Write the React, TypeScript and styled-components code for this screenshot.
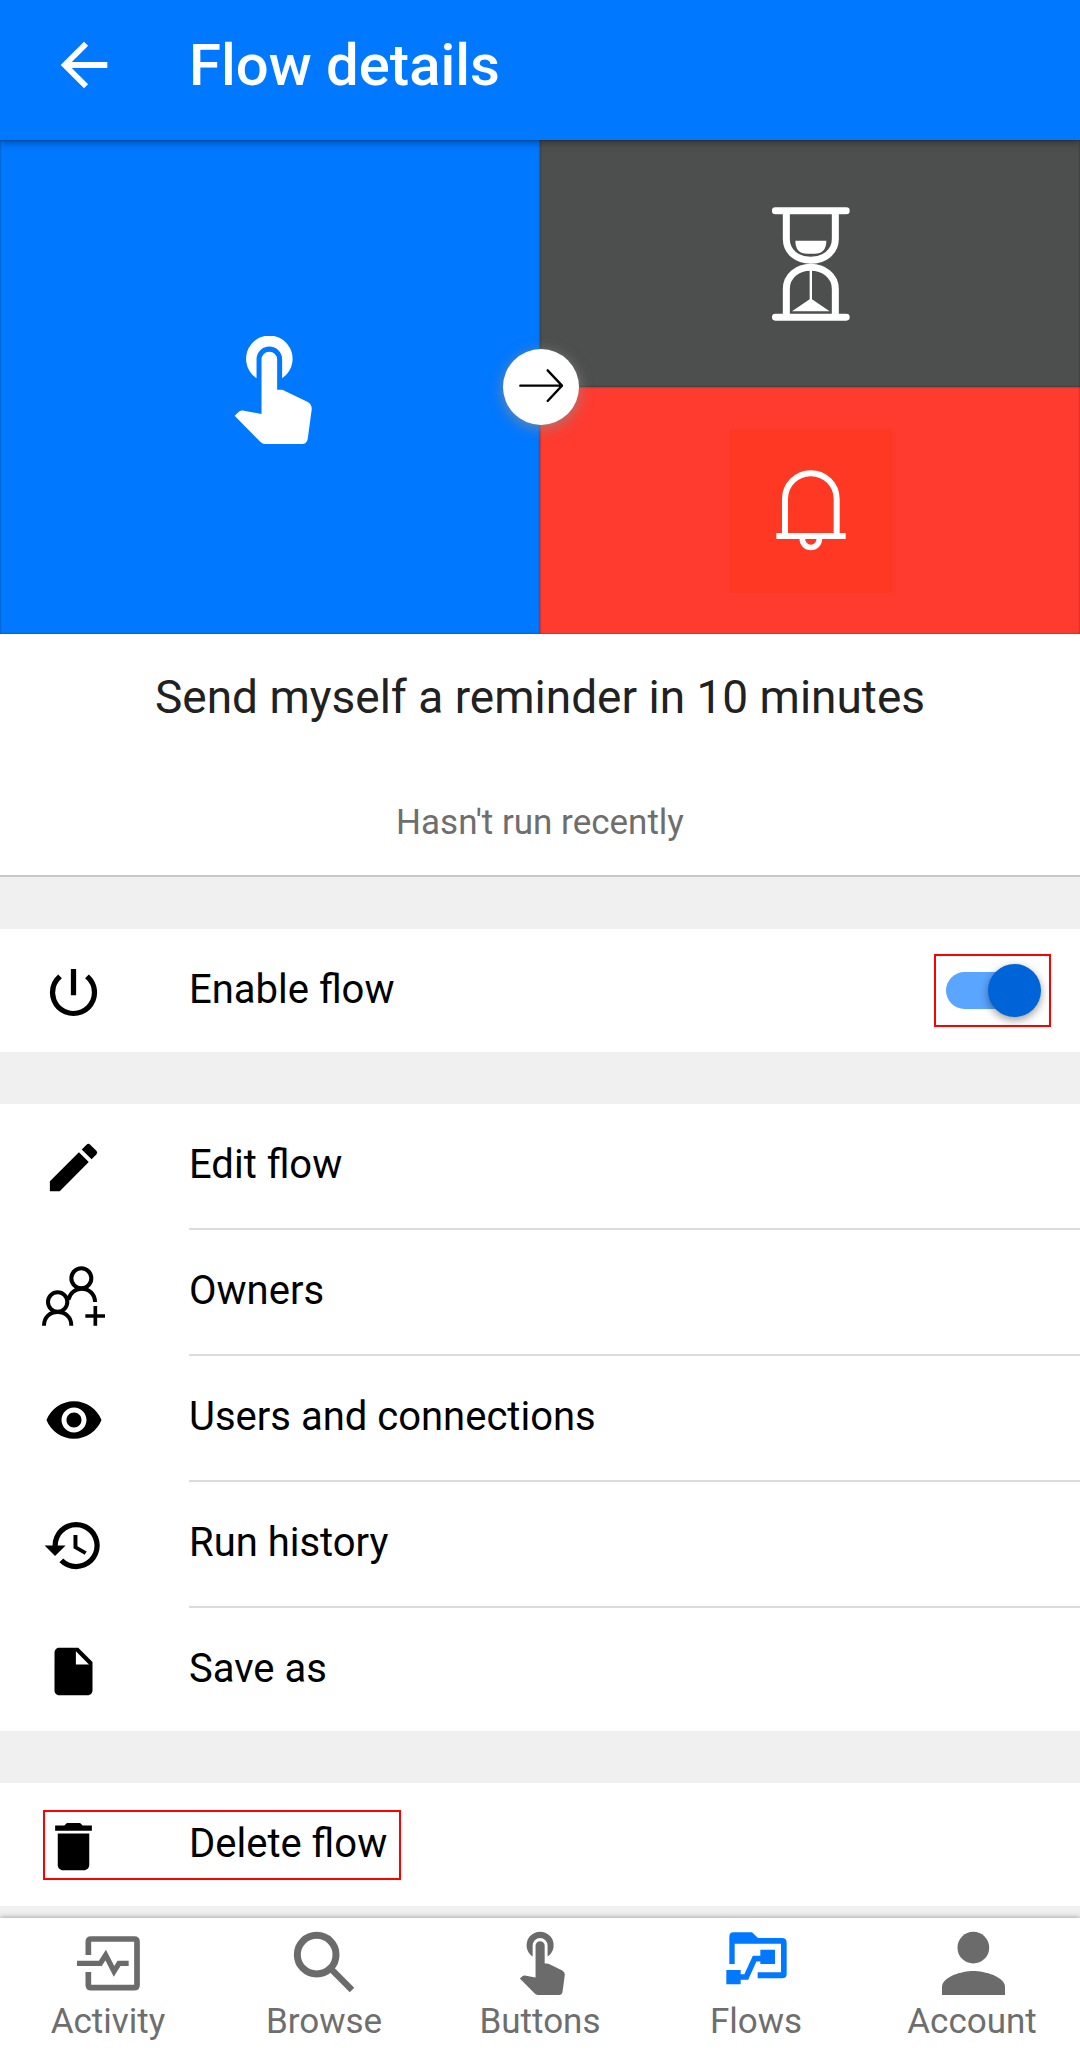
import React from 'react';
import styled, { createGlobalStyle } from 'styled-components';
import {
  MdArrowBack,
  MdDelete,
  MdEdit,
  MdHistory,
  MdInsertDriveFile,
  MdPowerSettingsNew,
  MdVisibility,
} from 'react-icons/md';

const GlobalStyle = createGlobalStyle`
  *, *::before, *::after { box-sizing: border-box; }
  body {
    margin: 0;
    background: #f0f0f0;
    font-family: Roboto, "Liberation Sans", sans-serif;
    color: #000;
  }
  button { font: inherit; color: inherit; border: 0; background: none; padding: 0; cursor: pointer; }
  h1, h2, p, ul { margin: 0; padding: 0; }
  svg { display: block; flex: none; }
`;

const Page = styled.div`
  min-height: 100vh;
  display: flex;
  flex-direction: column;
`;

const Header = styled.header`
  position: relative;
  z-index: 1;
  height: 140px;
  padding: 0 49px 10px;
  display: flex;
  align-items: center;
  gap: 70px;
  background: #0078ff;
  color: #fff;
  box-shadow: 0 2px 8px rgba(0, 0, 0, 0.4);
`;

const HeaderTitle = styled.h1`
  font-size: 58px;
  line-height: 68px;
  font-weight: 500;
`;

const Main = styled.main`
  flex: 1;
  display: flex;
  flex-direction: column;
  gap: 52px;
`;

const Hero = styled.div`
  position: relative;
  display: grid;
  grid-template-columns: 1fr 1fr;
  grid-template-rows: 247px 247px;
`;

const Tile = styled.div<{ $color: string; $tall?: boolean }>`
  grid-row: ${(p) => (p.$tall ? 'span 2' : 'auto')};
  padding: ${(p) => (p.$tall ? '5px 0 0' : '0 0 0 2px')};
  display: flex;
  align-items: center;
  justify-content: center;
  background: ${(p) => p.$color};
  box-shadow: inset 0 0 2px rgba(0, 0, 0, 0.5);
  color: #fff;
`;

const TileIcon = styled.div<{ $color?: string }>`
  width: 164px;
  height: 164px;
  display: flex;
  align-items: center;
  justify-content: center;
  background: ${(p) => p.$color || 'transparent'};
`;

const ArrowBadge = styled.div`
  position: absolute;
  top: 50%;
  left: 50%;
  width: 76px;
  height: 76px;
  margin: -38px 0 0 -37px;
  display: flex;
  align-items: center;
  justify-content: center;
  border-radius: 50%;
  background: #fff;
  box-shadow: 0 3px 14px rgba(140, 140, 140, 0.8);
`;

const Info = styled.div`
  padding: 33px 24px 32px;
  display: flex;
  flex-direction: column;
  gap: 76px;
  border-bottom: 2px solid #c8c8c8;
  background: #fff;
  text-align: center;
`;

const FlowName = styled.h2`
  font-size: 46px;
  line-height: 60px;
  font-weight: 400;
  color: #212121;
`;

const RunStatus = styled.p`
  font-size: 35px;
  line-height: 40px;
  color: #6e6e6e;
`;

const List = styled.ul`
  list-style: none;
  background: #fff;
`;

const Item = styled.li`
  position: relative;
  display: flex;
  flex-direction: column;

  &:not(:last-child) {
    padding-bottom: 3px;
  }

  &:not(:last-child)::after {
    content: '';
    position: absolute;
    left: 189px;
    right: 0;
    bottom: 0;
    height: 2px;
    background: #dcdcdc;
  }
`;

const RowButton = styled.button`
  height: 123px;
  padding-left: 42px;
  display: flex;
  align-items: center;
  text-align: left;
`;

const RowField = styled.div`
  height: 123px;
  padding: 0 29px 0 42px;
  display: flex;
  align-items: center;
  justify-content: space-between;
`;

const RowContent = styled.span<{ $marked?: boolean }>`
  position: relative;
  display: flex;
  align-items: center;
  gap: 84px;

  &::after {
    content: '';
    display: ${(p) => (p.$marked ? 'block' : 'none')};
    position: absolute;
    inset: -1px -14px -2px 1px;
    border: 2px solid #f00;
  }
`;

const RowIcon = styled.span`
  width: 63px;
  height: 67px;
  padding-top: 4px;
  display: flex;
  align-items: center;
  justify-content: center;
`;

const RowLabel = styled.span`
  padding-bottom: 1px;
  font-size: 40px;
  line-height: 48px;
`;

const SwitchMark = styled.span`
  padding: 8px 8px 8px 10px;
  display: flex;
  border: 2px solid #f00;
`;

const Switch = styled.input`
  appearance: none;
  width: 95px;
  height: 53px;
  margin: 0;
  display: grid;
  align-items: center;
  cursor: pointer;

  &::before {
    content: '';
    grid-area: 1 / 1;
    width: 88px;
    height: 37px;
    border-radius: 19px;
    background: #bdbdbd;
  }

  &::after {
    content: '';
    grid-area: 1 / 1;
    width: 53px;
    height: 53px;
    border-radius: 50%;
    background: #fafafa;
    box-shadow: 0 3px 8px rgba(0, 0, 0, 0.4);
  }

  &:checked::before { background: #5aa5ff; }
  &:checked::after { justify-self: end; background: #0064d9; }
`;

const TabBar = styled.nav`
  position: sticky;
  bottom: 0;
  padding: 14px 0 20px;
  display: grid;
  grid-template-columns: repeat(5, 1fr);
  background: #fff;
  box-shadow: 0 -1px 5px rgba(0, 0, 0, 0.3);
`;

const Tab = styled.button<{ $active?: boolean }>`
  display: flex;
  flex-direction: column;
  align-items: center;
  gap: 7px;
  font-size: 35px;
  line-height: 40px;
  color: #6e6e6e;

  svg {
    width: 63px;
    height: 63px;
    overflow: visible;
    color: ${(p) => (p.$active ? '#0078ff' : '#6b6b6b')};
  }
`;

const TapIcon = ({ size = 63 }: { size?: number }) => (
  <svg width={size} height={size} viewBox="47 76 325 325" fill="currentColor" aria-hidden="true">
    <path d="M169 203A70 70 0 1 1 246 203V146A38.5 38.5 0 0 0 169 146Z" />
    <path d="M184 147A23.5 23.5 0 0 1 231 147V238H243Q249 238 256 242L322 274Q336 282 335 297L323 386Q320 401 306 401H195Q187 401 181 395L103 316L116 304Q121 299 128 300L184 311Z" />
  </svg>
);

const HourglassIcon = () => (
  <svg width="78" height="114" viewBox="218 79 234 342" fill="currentColor" aria-hidden="true">
    <rect x="218" y="80" width="233" height="21" rx="10" />
    <rect x="218" y="399" width="233" height="21" rx="10" />
    <g fill="none" stroke="currentColor" strokeWidth="21">
      <path d="M261 98V175C261 215 295 239 334 239S408 215 408 175V98" />
      <path d="M261 402V325C261 285 295 260 334 260S408 285 408 325V402" />
    </g>
    <path d="M288 180H381Q381 219 345 219H324Q288 219 288 180Z" />
    <path d="M331 268H338V356L391 392H278L331 356Z" />
  </svg>
);

const BellIcon = () => (
  <svg width="70" height="81" viewBox="232 871 210 243" fill="none" stroke="currentColor" aria-hidden="true">
    <path strokeWidth="18" d="M259 1064V958A77.5 77.5 0 0 1 414 958V1064" />
    <path strokeWidth="18" d="M233 1069H441" />
    <path strokeWidth="17" d="M311 1076V1078A25.5 25.5 0 0 0 362 1078V1076" />
  </svg>
);

const ArrowIcon = () => (
  <svg width="76" height="76" viewBox="909 116 228 228" fill="none" stroke="#000" strokeWidth="7" strokeLinecap="round" strokeLinejoin="round" aria-hidden="true">
    <path d="M961 226H1086M1043 180L1086 226L1043 272" />
  </svg>
);

const OwnersIcon = () => (
  <svg width="63" height="63" viewBox="126 67 189 189" fill="none" stroke="currentColor" strokeWidth="12" overflow="visible" aria-hidden="true">
    <circle cx="244" cy="116" r="30" />
    <circle cx="173" cy="187" r="29" />
    <path d="M132 258C132 232 150 217 173 217S214 232 214 258" />
    <path d="M205 180C210 160 226 147 244 147C268 147 285 164 285 187" />
    <path strokeWidth="11" d="M256 229H315M286 199V258" />
  </svg>
);

const ActivityIcon = () => (
  <svg viewBox="231 516 189 189" fill="none" stroke="currentColor" strokeWidth="17" aria-hidden="true">
    <path d="M265 585V545Q265 537 273 537H403Q411 537 411 545V675Q411 683 403 683H273Q265 683 265 675V636" />
    <path strokeWidth="16" d="M231 610H301L317 585L342 634L357 610H386" />
  </svg>
);

const BrowseIcon = () => (
  <svg viewBox="877 516 189 189" fill="none" stroke="currentColor" aria-hidden="true">
    <circle cx="948" cy="584" r="58" strokeWidth="21" />
    <path strokeWidth="19" d="M992 628L1054 690" />
  </svg>
);

const FlowsIcon = () => (
  <svg viewBox="914 126 189 189" fill="currentColor" aria-hidden="true">
    <path d="M927 222V140Q927 127 940 127H995L1013 144H1085Q1099 144 1099 158V252Q1099 265 1085 265H1012V247H1082V161H943V222Z" />
    <path d="M918 240H961V283H918ZM1020 179H1064V222H1020Z" />
    <path fill="none" stroke="currentColor" strokeWidth="17" d="M958 261H978L1003 206H1022" />
  </svg>
);

const AccountIcon = () => (
  <svg viewBox="363 126 189 189" fill="currentColor" aria-hidden="true">
    <circle cx="460" cy="173" r="47.5" />
    <path d="M366 315V291C366 260 426 243 460 243S555 260 555 291V315Z" />
  </svg>
);

const actions = [
  { label: 'Edit flow', icon: <MdEdit size={63} /> },
  { label: 'Owners', icon: <OwnersIcon /> },
  { label: 'Users and connections', icon: <MdVisibility size={60} /> },
  { label: 'Run history', icon: <MdHistory size={63} /> },
  { label: 'Save as', icon: <MdInsertDriveFile size={57} /> },
];

const tabs = [
  { label: 'Activity', icon: <ActivityIcon /> },
  { label: 'Browse', icon: <BrowseIcon /> },
  { label: 'Buttons', icon: <TapIcon /> },
  { label: 'Flows', icon: <FlowsIcon />, active: true },
  { label: 'Account', icon: <AccountIcon /> },
];

interface ActionRowProps {
  label: string;
  icon: React.ReactNode;
  marked?: boolean;
}

const ActionRow = ({ label, icon, marked }: ActionRowProps) => (
  <Item>
    <RowButton type="button">
      <RowContent $marked={marked}>
        <RowIcon>{icon}</RowIcon>
        <RowLabel>{label}</RowLabel>
      </RowContent>
    </RowButton>
  </Item>
);

export default function App() {
  const [enabled, setEnabled] = React.useState(true);

  return (
    <Page>
      <GlobalStyle />
      <Header>
        <button type="button" aria-label="Back">
          <MdArrowBack size={70} />
        </button>
        <HeaderTitle>Flow details</HeaderTitle>
      </Header>

      <Main>
        <section>
          <Hero>
            <Tile $color="#0078ff" $tall>
              <TapIcon size={108} />
            </Tile>
            <Tile $color="#4d4f4e">
              <TileIcon>
                <HourglassIcon />
              </TileIcon>
            </Tile>
            <Tile $color="#ff3b30">
              <TileIcon $color="#ff3823">
                <BellIcon />
              </TileIcon>
            </Tile>
            <ArrowBadge>
              <ArrowIcon />
            </ArrowBadge>
          </Hero>
          <Info>
            <FlowName>Send myself a reminder in 10 minutes</FlowName>
            <RunStatus>Hasn't run recently</RunStatus>
          </Info>
        </section>

        <List>
          <Item>
            <RowField>
              <RowContent as="label" htmlFor="enable-flow">
                <RowIcon>
                  <MdPowerSettingsNew size={63} />
                </RowIcon>
                <RowLabel>Enable flow</RowLabel>
              </RowContent>
              <SwitchMark>
                <Switch
                  id="enable-flow"
                  type="checkbox"
                  checked={enabled}
                  onChange={(e) => setEnabled(e.target.checked)}
                />
              </SwitchMark>
            </RowField>
          </Item>
        </List>

        <List>
          {actions.map((action) => (
            <ActionRow key={action.label} {...action} />
          ))}
        </List>

        <List>
          <ActionRow label="Delete flow" icon={<MdDelete size={63} />} marked />
        </List>
      </Main>

      <TabBar>
        {tabs.map((tab) => (
          <Tab key={tab.label} type="button" $active={tab.active}>
            {tab.icon}
            {tab.label}
          </Tab>
        ))}
      </TabBar>
    </Page>
  );
}
